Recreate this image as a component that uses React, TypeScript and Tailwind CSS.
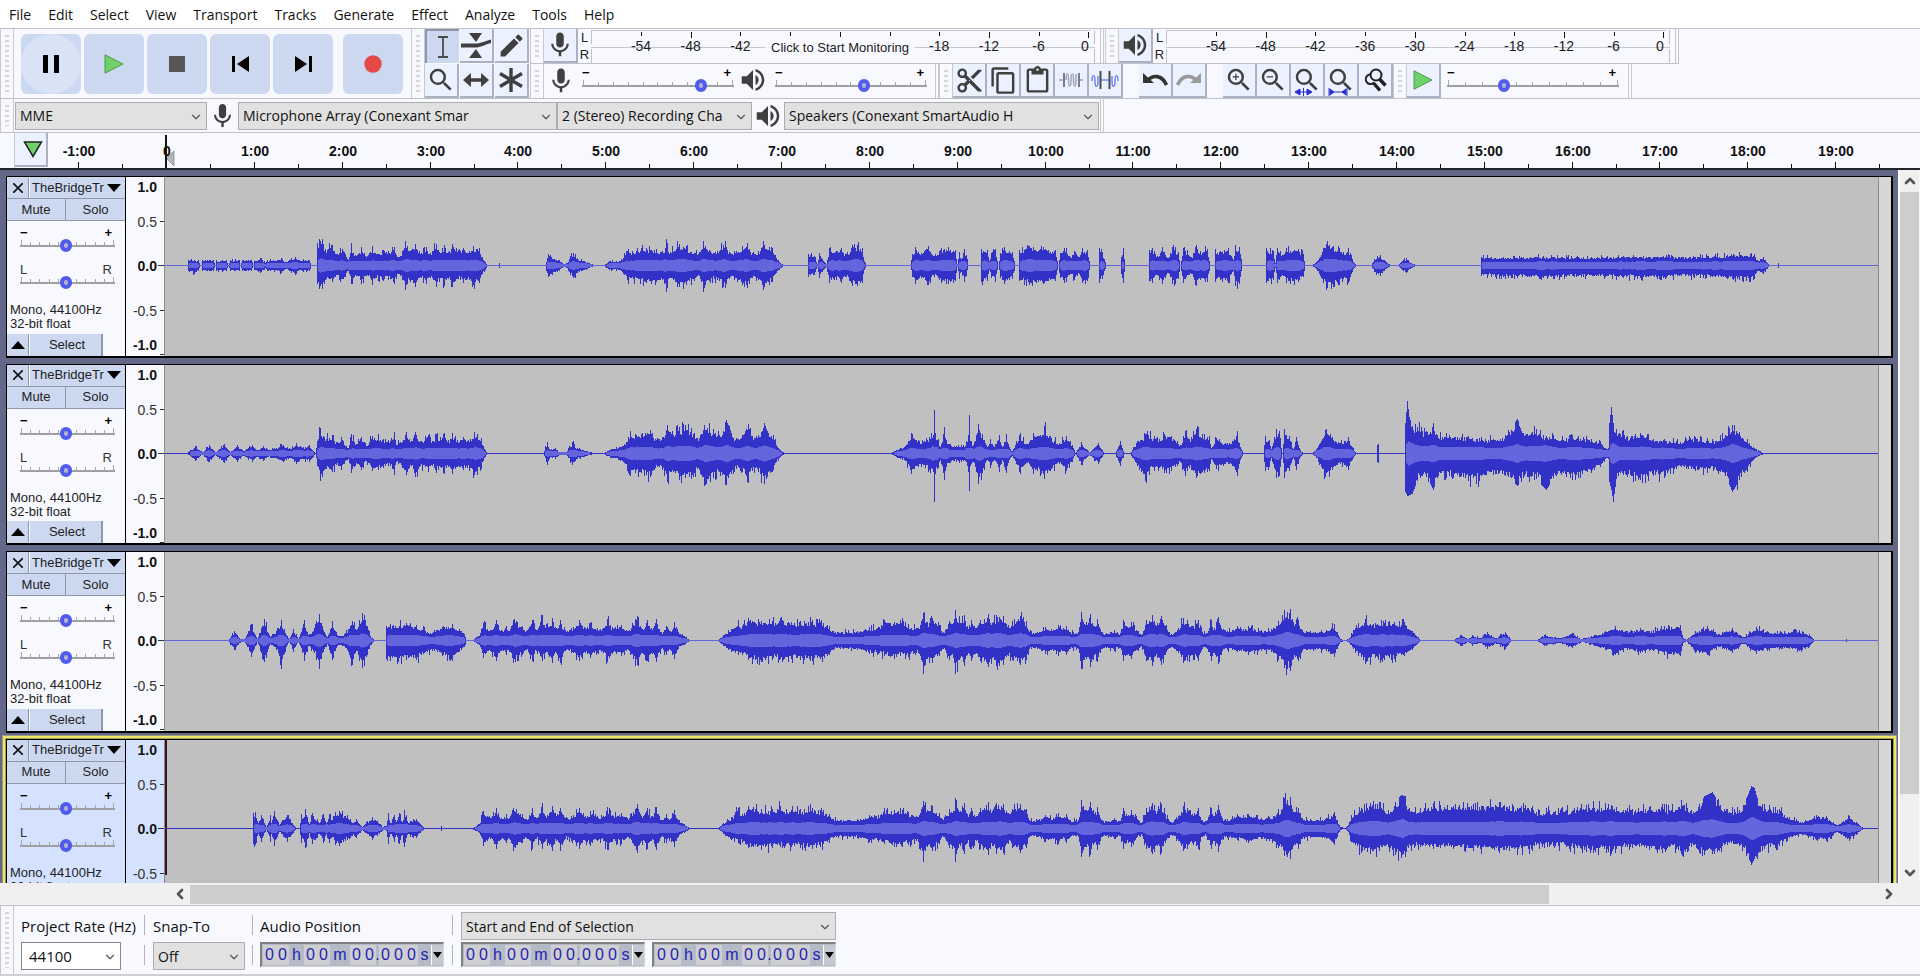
import React, { useMemo, useState } from 'react';
import {
  MdMic,
  MdVolumeUp,
  MdContentCopy,
  MdContentCut,
  MdContentPaste,
  MdSearch,
  MdZoomIn,
  MdZoomOut,
  MdEdit,
} from 'react-icons/md';
import { ChevronDown, ChevronLeft, ChevronRight, ChevronUp } from 'lucide-react';

type Point = [number, number, number?];

const CLIP_WIDTH = 1715;
const CLIP_MID = 88;

const MENUS = ['File', 'Edit', 'Select', 'View', 'Transport', 'Tracks', 'Generate', 'Effect', 'Analyze', 'Tools', 'Help'];

// Envelope points: [x, level above the axis, level below the axis]
const CHORUS: Point[] = [
  [307, 0], [314, 4], [318, 17], [325, 10], [331, 20], [336, 10], [341, 14], [343, 9], [348, 20, 22], [357, 14], [361, 9],
  [367, 20], [371, 10], [377, 25, 20], [380, 12], [387, 22], [391, 12], [395, 20, 22], [400, 10], [406, 12], [414, 20], [420, 12],
  [425, 17], [433, 12], [439, 12], [443, 21], [448, 13], [457, 15], [465, 10], [473, 24], [477, 12], [483, 20], [487, 12],
  [492, 21], [497, 8], [502, 14], [506, 9], [510, 18], [514, 8], [520, 4], [525, 0], [554, 0], [559, 5], [567, 11], [574, 20, 14],
  [578, 14], [584, 22, 19], [597, 19, 21], [608, 19], [616, 22, 18], [627, 18], [636, 19], [640, 19], [648, 20], [656, 18], [665, 14],
  [669, 9], [693, 9], [705, 13], [714, 13], [720, 20, 15], [730, 18], [736, 20, 15], [744, 16], [752, 12], [757, 19], [759, 27, 33],
  [763, 18], [768, 22], [775, 15], [779, 8], [785, 19], [789, 17], [791, 30, 33], [796, 17], [800, 25], [803, 14], [807, 20],
  [812, 12], [816, 20], [824, 26], [828, 17], [832, 25], [839, 24], [844, 15], [848, 19], [856, 24], [862, 19], [865, 8],
  [873, 8], [881, 13], [889, 10], [894, 15], [898, 10], [902, 14], [906, 8], [914, 8], [917, 28], [922, 18], [926, 26],
  [930, 14], [933, 21], [938, 8], [942, 7], [950, 10], [956, 7], [959, 20], [962, 14], [967, 18], [977, 5], [982, 20], [988, 25],
  [993, 17], [997, 24], [1001, 14], [1007, 6], [1014, 12], [1019, 22], [1023, 20], [1028, 14], [1034, 20], [1038, 8], [1042, 7],
  [1047, 20], [1050, 12], [1054, 23], [1058, 10], [1063, 9], [1073, 14, 11], [1081, 11], [1084, 14], [1097, 10], [1109, 12],
  [1114, 19], [1117, 18], [1120, 30, 27], [1123, 28], [1126, 31, 30], [1131, 16], [1134, 20], [1138, 10], [1146, 9], [1162, 10],
  [1170, 16], [1173, 8], [1176, 1],
];

const WAVES: Point[][] = [
  [
    [22, 0], [23, 5], [29, 5, 8], [33, 5], [35, 0], [36, 0], [37, 5], [48, 5], [50, 0], [51, 5], [61, 5], [63, 0], [65, 5], [74, 5], [75, 0],
    [77, 5], [86, 5], [88, 0], [89, 4], [95, 7], [99, 4], [100, 2], [102, 5], [112, 5], [116, 7], [120, 3], [124, 5], [130, 8, 9], [135, 4],
    [138, 6], [144, 5], [146, 0], [151, 0], [152, 22, 18], [154, 26, 23], [157, 26, 23], [160, 16, 14], [167, 20, 16], [171, 11, 9],
    [175, 17, 16], [180, 11], [183, 5], [186, 22, 18], [188, 12], [192, 10], [196, 18], [202, 9], [207, 19], [210, 12], [218, 15], [223, 14],
    [229, 18], [232, 8], [237, 14], [240, 24], [244, 14], [250, 21], [256, 12], [261, 18], [265, 12], [271, 21], [275, 12], [279, 20],
    [283, 13], [287, 21], [292, 13], [298, 17], [304, 14], [308, 19], [314, 17], [317, 8], [322, 0], [333, 0], [334, 2], [335, 0],
    [380, 0], [383, 11], [386, 8], [394, 5], [398, 1], [402, 2], [405, 9], [408, 12], [412, 7], [422, 3], [429, 0], [440, 0], [445, 4],
    [455, 4], [463, 14], [482, 17], [492, 16], [498, 14], [501, 17], [502, 26], [504, 13], [515, 21], [522, 19], [531, 12], [536, 13],
    [539, 24, 26], [545, 15], [553, 14], [561, 24, 22], [565, 13], [571, 12], [578, 19], [583, 22], [588, 12], [594, 14], [599, 24],
    [607, 18, 16], [612, 7], [618, 1], [620, 0], [643, 0], [644, 11], [650, 9], [653, 1], [655, 12], [658, 6], [662, 1], [665, 17],
    [672, 14], [677, 17], [682, 11], [688, 20], [693, 20], [698, 17], [700, 4], [702, 0], [746, 0], [748, 11], [751, 18], [757, 12],
    [764, 19], [769, 9], [777, 17], [784, 18], [791, 15], [793, 1], [795, 13], [797, 6], [800, 16], [802, 10], [804, 0], [816, 0],
    [817, 16], [823, 15], [825, 4], [827, 12], [831, 16], [834, 0], [836, 12], [840, 18], [845, 14], [848, 13], [851, 0], [854, 0],
    [855, 15], [865, 19], [879, 18], [891, 15], [894, 0], [896, 12], [900, 17], [906, 8], [910, 14], [915, 8], [918, 17], [923, 15], [926, 0],
    [934, 0], [935, 17], [938, 13], [942, 0], [956, 0], [957, 8], [959, 17], [961, 0], [984, 0], [985, 15], [988, 17], [993, 9],
    [998, 18], [1004, 7], [1008, 18], [1014, 13], [1016, 0], [1019, 17], [1027, 8], [1032, 20], [1036, 14], [1043, 16], [1046, 0],
    [1050, 0], [1051, 16], [1057, 13], [1064, 17], [1069, 5], [1071, 20], [1075, 18], [1078, 0], [1101, 0], [1102, 17], [1109, 14],
    [1111, 2], [1113, 17], [1119, 10], [1122, 17], [1134, 16], [1139, 11], [1141, 0], [1148, 0], [1152, 3], [1159, 17], [1163, 24, 22],
    [1168, 18], [1174, 19], [1179, 13], [1184, 17], [1188, 6], [1192, 0], [1207, 0], [1210, 6], [1216, 10], [1220, 5], [1226, 0], [1234, 0],
    [1239, 5], [1242, 7], [1247, 2], [1252, 0], [1317, 0], [1318, 8, 10], [1340, 8, 11], [1380, 9, 12], [1420, 8, 11], [1460, 9, 12],
    [1500, 9, 12], [1530, 9, 11], [1564, 10, 13], [1570, 11, 14], [1591, 11, 13], [1594, 5], [1600, 8], [1606, 0], [1614, 0], [1615, 2], [1616, 0],
  ],
  [
    [22, 0], [30, 7], [37, 1], [44, 8], [50, 1], [59, 9], [65, 1], [72, 8], [78, 2], [87, 8], [92, 3], [98, 7], [103, 3], [118, 8], [125, 4],
    [131, 10], [137, 5], [144, 8], [150, 0], [152, 12], [155, 25, 27], [159, 16], [167, 18], [171, 11], [176, 16], [183, 5], [186, 19],
    [191, 9], [196, 16], [201, 7], [207, 17], [218, 14], [225, 12], [229, 21], [231, 8], [241, 21], [246, 12], [250, 21, 23], [255, 12],
    [263, 18], [267, 12], [271, 19], [274, 12], [278, 19], [283, 13], [287, 20], [292, 13], [298, 16], [305, 14], [309, 21], [316, 15],
    [318, 7], [322, 0], [378, 0], [382, 11], [385, 3], [390, 5], [394, 1], [401, 1], [407, 11], [412, 5], [425, 1], [429, 0], [439, 0],
    [447, 4], [455, 6], [460, 9], [466, 22], [471, 19], [486, 23], [491, 14], [498, 16], [503, 28], [509, 18], [515, 26], [527, 25],
    [533, 15], [540, 28, 32], [549, 24], [555, 18], [562, 33, 31], [567, 20], [572, 15], [578, 18], [584, 29], [588, 17], [594, 18],
    [600, 30], [609, 18, 16], [612, 8], [618, 1], [622, 0], [727, 0], [730, 2], [736, 5], [741, 7], [747, 20], [754, 13], [759, 11],
    [765, 16], [769, 18], [770, 43, 48], [771, 20], [774, 14], [776, 6], [780, 26], [782, 13], [790, 7], [797, 8], [801, 7], [804, 18],
    [805, 38, 37], [806, 12], [809, 8], [812, 18], [814, 29, 30], [818, 19], [823, 6], [826, 14], [830, 6], [835, 18], [838, 6], [842, 19],
    [845, 6], [848, 2], [855, 18], [863, 9], [869, 20], [873, 17], [880, 27, 25], [886, 17], [895, 10], [902, 17], [908, 8], [911, 0],
    [917, 11], [923, 3], [925, 1], [934, 10], [940, 0], [951, 0], [956, 12], [960, 0], [966, 0], [973, 12], [982, 19, 29], [984, 18, 17],
    [990, 17], [995, 14], [1000, 19], [1007, 17], [1013, 12], [1016, 8], [1021, 22], [1025, 14], [1032, 24], [1040, 19], [1045, 17],
    [1047, 5], [1052, 15], [1061, 10], [1068, 12], [1073, 22], [1075, 10], [1079, 0], [1099, 0], [1101, 17], [1105, 13], [1107, 4],
    [1112, 24], [1115, 22], [1118, 0], [1120, 24], [1125, 17], [1129, 4], [1132, 16], [1136, 3], [1139, 0], [1148, 0], [1152, 4],
    [1161, 23], [1168, 16], [1176, 10], [1184, 16], [1188, 6], [1192, 0], [1212, 0], [1213, 8], [1214, 9], [1215, 0], [1240, 0], [1241, 30, 38],
    [1243, 52, 42], [1245, 36, 41], [1248, 27, 40], [1253, 26, 27], [1262, 22, 23], [1269, 30, 36], [1273, 18, 24], [1285, 18, 22], [1305, 17, 27],
    [1316, 15, 27], [1330, 14, 21], [1342, 18, 22], [1354, 34, 32], [1360, 20, 24], [1373, 24, 25], [1383, 17, 36], [1390, 18, 24],
    [1403, 15, 23], [1415, 17, 24], [1428, 14, 19], [1437, 12, 13], [1442, 5], [1445, 5], [1446, 30, 28], [1448, 46, 36], [1450, 30, 48],
    [1453, 24, 25], [1464, 17, 23], [1477, 20, 26], [1490, 14, 22], [1501, 14, 24], [1513, 12, 15], [1532, 16, 17], [1550, 12, 17],
    [1562, 18, 22], [1569, 28, 38], [1576, 21, 26], [1584, 14, 18], [1590, 6], [1600, 0],
  ],
  [
    [63, 0], [69, 9], [76, 1], [79, 1], [82, 6], [86, 16], [92, 1], [96, 12], [99, 21], [105, 3], [111, 9], [113, 12], [116, 20, 28], [122, 4], [124, 1],
    [128, 11], [133, 1], [137, 12], [139, 20], [143, 5], [149, 12], [152, 17], [154, 26, 28], [159, 8], [162, 3], [167, 19], [173, 4],
    [180, 7], [187, 19, 24], [191, 10], [194, 20], [197, 27], [199, 25], [202, 14], [205, 4], [209, 0], [220, 0], [221, 14, 18],
    [225, 16, 20], [241, 17, 19], [251, 15, 19], [267, 7, 10], [269, 10], [278, 14], [287, 16, 20], [296, 9], [299, 6], [301, 0],
    ...CHORUS,
    [1180, 0], [1184, 1], [1191, 12], [1201, 21, 23], [1211, 17], [1220, 17, 19], [1230, 18], [1240, 18, 15], [1248, 9], [1256, 0],
    [1290, 0], [1298, 5], [1305, 1], [1309, 5], [1317, 2], [1324, 8], [1332, 2], [1342, 8], [1348, 0], [1374, 0], [1381, 5], [1397, 2],
    [1409, 7], [1418, 1], [1431, 5], [1442, 9], [1452, 14], [1464, 9], [1477, 12], [1490, 10], [1501, 14], [1517, 15], [1520, 2], [1523, 0],
    [1532, 9, 12], [1544, 14], [1556, 6], [1569, 12], [1580, 3], [1593, 13], [1605, 8], [1618, 8], [1636, 10], [1646, 6], [1651, 0], [1682, 0],
    [1683, 1], [1684, 0],
  ],
  [
    [87, 0], [88, 15], [90, 16], [93, 5], [96, 13], [101, 1], [105, 13], [106, 5], [109, 17], [114, 3], [118, 8], [122, 13], [127, 5], [131, 0],
    [134, 0], [136, 14], [138, 10], [140, 19], [144, 4], [147, 15], [152, 9], [154, 5], [158, 14], [161, 5], [164, 14], [167, 8], [170, 16], [174, 17],
    [180, 12], [185, 9], [188, 5], [191, 9], [197, 1], [200, 4], [207, 11], [212, 7], [218, 1], [221, 2], [223, 15], [225, 5], [229, 13],
    [231, 6], [234, 15], [237, 6], [239, 18], [243, 5], [248, 9], [251, 9], [259, 0], [275, 0], [276, 2], [277, 0],
    ...CHORUS,
    [1181, 0], [1184, 3], [1187, 13], [1197, 20, 24], [1206, 25], [1215, 26, 22], [1224, 18], [1231, 26], [1237, 33, 29], [1241, 32, 28], [1244, 19],
    [1256, 20, 18], [1269, 25, 20], [1276, 23, 19], [1290, 22, 20], [1310, 24, 22], [1336, 26, 24], [1346, 22], [1369, 22], [1373, 16],
    [1386, 18], [1403, 18], [1423, 23], [1449, 22], [1469, 19], [1486, 21], [1499, 24], [1506, 18], [1518, 28, 25], [1528, 18], [1536, 24],
    [1541, 32, 26], [1549, 36, 25], [1554, 28, 23], [1564, 19, 16], [1576, 18, 17], [1584, 32, 25], [1588, 42, 36], [1591, 40, 30],
    [1594, 30, 30], [1599, 24, 22], [1616, 19, 17], [1626, 11, 9], [1639, 6], [1653, 13, 11], [1663, 12], [1674, 3], [1686, 12], [1693, 6], [1700, 0],
  ],
];

const sampleAt = (points: Point[], x: number, side: 1 | 2) => {
  const i = points.findIndex(p => p[0] >= x);
  if (i <= 0) return 0;
  const a = points[i - 1];
  const b = points[i];
  const va = side === 2 ? a[2] ?? a[1] : a[1];
  const vb = side === 2 ? b[2] ?? b[1] : b[1];
  return va + ((vb - va) * (x - a[0])) / (b[0] - a[0] || 1);
};

const stepPath = (top: number[], bottom: number[]) => {
  let d = `M0 ${CLIP_MID}`;
  top.forEach((v, x) => { d += `V${(CLIP_MID - v).toFixed(1)}H${x + 1}`; });
  for (let x = bottom.length - 1; x >= 0; x--) d += `V${(CLIP_MID + 1 + bottom[x]).toFixed(1)}H${x}`;
  return d + 'Z';
};

const buildWave = (points: Point[], seed: number, darkAxis: boolean) => {
  let s = seed;
  const rand = () => {
    s = (s * 16807) % 2147483647;
    return s / 2147483647;
  };
  const marked = new Set(points.map(p => p[0]));
  const up: number[] = [];
  const down: number[] = [];
  for (let x = 0; x < CLIP_WIDTH; x++) {
    const gain = () => (marked.has(x) ? 1 : 0.7 + rand() * 0.24 + (rand() > 0.86 ? 0.3 : 0));
    const u = sampleAt(points, x, 1);
    const d = sampleAt(points, x, 2);
    up.push(u > 30 ? u : u * gain());
    down.push(d > 30 ? d : d * gain());
  }
  const rms = up.map((_, x) => {
    let sum = 0;
    let low = 99;
    for (let k = -3; k <= 3; k++) {
      const v = ((up[x + k] ?? 0) + (down[x + k] ?? 0)) / 2;
      sum += v;
      if (Math.abs(k) < 2) low = Math.min(low, v);
    }
    return Math.round(Math.min(low * 0.7, 1 + (sum / 7) * 0.27));
  });
  const rmsDown = rms.map(v => (darkAxis && v === 0 ? -1 : v));
  return { peak: stepPath(up, down), rms: stepPath(rms, rmsDown) };
};

const Gripper = () => (
  <div className="w-[14px] shrink-0 self-stretch border-x border-[#c9c9cd] px-1 py-[6px]">
    <div className="h-full bg-[repeating-linear-gradient(to_bottom,#d4d4da_0px,#d4d4da_2px,transparent_2px,transparent_5px)]" />
  </div>
);

const BarEnd = () => <div className="ml-[5px] w-[4px] shrink-0 self-stretch border-x border-[#c9c9cd]" />;

const ToolButton = ({ label, active, children }: { label: string; active?: boolean; children: React.ReactNode }) => (
  <button
    aria-label={label}
    className={`flex h-[34px] w-[34px] shrink-0 items-center justify-center overflow-hidden text-[#3f3f3f] ${
      active ? 'border-t-2 border-l-2 border-[#8d97ab] bg-[#ccd8f0]' : 'border-r-2 border-b-2 border-[#aab1c2] bg-[#ebf1ff]'
    }`}
  >
    {children}
  </button>
);

const TransportButton = ({ label, round, children }: { label: string; round?: boolean; children: React.ReactNode }) => (
  <button aria-label={label} className="flex h-[60px] w-[60px] items-center justify-center rounded-md bg-[#ccd8f0]">
    <span className={`flex h-full w-full items-center justify-center rounded-full ${round ? 'bg-[#dae3f5]' : ''}`}>{children}</span>
  </button>
);

const Slider = ({ label, value, left = '−', right = '+', className }: { label: string; value: number; left?: string; right?: string; className: string }) => {
  const [level, setLevel] = useState(value);
  const heavy = left === '−' ? 'font-bold text-black' : 'text-[#333]';
  return (
    <div className={`shrink-0 ${className}`}>
      <div className={`flex h-3 justify-between pr-[3px] text-[13px] leading-3 ${heavy}`}>
        <span>{left}</span>
        <span>{right}</span>
      </div>
      <div className="relative h-[13px]">
        <div className="flex h-[6px] items-end justify-between px-px">
          {Array.from({ length: 11 }, (_, i) => (
            <span key={i} className={`w-px bg-[#a9a9a9] ${i % 10 === 0 ? 'h-[5px]' : 'h-[3px]'}`} />
          ))}
        </div>
        <div className="h-[2px] bg-[#a0a0a0]" />
        <input
          type="range"
          aria-label={label}
          min={0}
          max={100}
          value={level}
          onChange={e => setLevel(Number(e.target.value))}
          className="absolute inset-0 h-[13px] w-full appearance-none bg-transparent [&::-webkit-slider-thumb]:h-[13px] [&::-webkit-slider-thumb]:w-3 [&::-webkit-slider-thumb]:appearance-none [&::-webkit-slider-thumb]:rounded-full [&::-webkit-slider-thumb]:border-4 [&::-webkit-slider-thumb]:border-[#4f5aee] [&::-webkit-slider-thumb]:bg-[#b4b4cc]"
        />
      </div>
    </div>
  );
};

const Select = ({ label, text, className }: { label: string; text: string; className: string }) => (
  <div className={`relative shrink-0 ${className}`}>
    <select
      aria-label={label}
      className="h-7 w-full appearance-none border border-[#adadad] bg-[#e1e1e1] pr-7 pl-1 font-['Open_Sans',sans-serif] text-[14px] text-[#111]"
    >
      <option>{text}</option>
    </select>
    <ChevronDown className="pointer-events-none absolute top-2 right-1 h-[14px] w-[14px] text-[#555]" strokeWidth={2} />
  </div>
);

const Meter = ({ label, icon, monitor }: { label: string; icon: React.ReactNode; monitor?: boolean }) => {
  const marks = [-54, -48, -42, -36, -30, -24, -18, -12, -6, 0];
  return (
    <>
      <ToolButton label={label}>{icon}</ToolButton>
      <div className="flex w-[13px] shrink-0 flex-col items-center text-[13px] leading-[17px] text-[#222]">
        <span>L</span>
        <span>R</span>
      </div>
      <svg className="h-[34px] w-[504px] shrink-0" fontSize="14" fill="#222">
        <path d="M0.5 1V15M0.5 20V34M503.5 1V15M503.5 20V34" stroke="#c2c2c6" />
        <path d="M0 1.5H500M0 18.5H504" stroke="#c8c8cc" />
        {marks.map((m, i) => (
          <g key={m}>
            <rect x={Math.round(50 + i * 49.7)} y="3" width="1" height={i % 3 === 1 || m === 0 ? 6 : 4} fill="#111" />
            {(!monitor || m < -36 || m > -24) && (
              <text x={m === 0 ? 494 : 50 + i * 49.7} y="22" textAnchor="middle">{m}</text>
            )}
          </g>
        ))}
        {monitor && (
          <>
            <rect x="174" y="8" width="150" height="22" fill="#f9faff" />
            <text x="249" y="23" fontSize="13" textAnchor="middle">Click to Start Monitoring</text>
          </>
        )}
      </svg>
    </>
  );
};

const PlayIcon = ({ className }: { className: string }) => (
  <svg viewBox="0 0 20 20" className={className}>
    <path d="M1 .8 19 10 1 19.2z" fill="#6fd268" stroke="#4f9a4c" strokeWidth="1" />
  </svg>
);

const SilenceIcon = ({ outer }: { outer?: boolean }) => (
  <svg viewBox="0 0 28 24" className="h-6 w-7 shrink-0" fill="none" strokeWidth="1.5">
    {outer ? (
      <>
        <path d="M1 13c0-7 3-7 3 0s3 7 3 0V8M21 8v5c0 7 3 7 3 0s3-7 3 0" stroke="#7585ee" />
        <path d="M10 12h8" stroke="#7585ee" />
        <path d="M9.500 3v18M18.500 3v18" stroke="#4a4a4a" strokeWidth="2" />
      </>
    ) : (
      <>
        <path d="M2 12h5M22 12h4" stroke="#9aa0b0" />
        <path d="M9 12c0-8 2.500-8 2.500 0s2.500 8 2.500 0 2.500-8 2.500 0 2.500 8 2.500 0V6" stroke="#a0a6b6" />
        <path d="M7 5v14M22 5v14" stroke="#777c88" strokeWidth="2" />
      </>
    )}
  </svg>
);

const FitIcon = ({ project }: { project?: boolean }) => (
  <span className="relative flex h-full w-full items-center justify-center">
    <MdSearch className="h-[30px] w-[30px] shrink-0" />
    <svg viewBox="0 0 20 8" className="absolute bottom-0 left-[3px] h-[8px] w-5" fill="#2d2dcc" stroke="#2d2dcc">
      {project ? (
        <path d="M1 0v8M19 0v8M3 4h14M2 1l4 3-4 3zM18 1l-4 3 4 3z" />
      ) : (
        <path d="M1 4l5-3v6zM18 4l-5-3v6zM4 4h12M9.500 0v8" />
      )}
    </svg>
  </span>
);

const Toolbar = () => (
  <div className="flex h-[71px] shrink-0 overflow-hidden border-y border-[#c2c2c6]">
    <Gripper />
    <div className="flex w-[397px] shrink-0 items-center gap-[3px] pl-[7px]">
      <TransportButton label="Pause" round>
        <svg viewBox="0 0 16 18" className="h-[18px] w-4"><path d="M0 0h5v18H0zM11 0h5v18h-5z" /></svg>
      </TransportButton>
      <TransportButton label="Play"><PlayIcon className="h-5 w-5" /></TransportButton>
      <TransportButton label="Stop">
        <svg viewBox="0 0 16 16" className="h-4 w-4"><path d="M0 0h16v16H0z" fill="#575757" /></svg>
      </TransportButton>
      <TransportButton label="Skip to Start">
        <svg viewBox="0 0 17 16" className="h-4 w-[17px]"><path d="M0 0h3v16H0zM17 0v16L5 8z" /></svg>
      </TransportButton>
      <TransportButton label="Skip to End">
        <svg viewBox="0 0 17 16" className="h-4 w-[17px]"><path d="M14 0h3v16h-3zM0 0l12 8L0 16z" /></svg>
      </TransportButton>
      <div className="ml-[7px]">
        <TransportButton label="Record">
          <svg viewBox="0 0 18 18" className="h-[18px] w-[18px]"><circle cx="9" cy="9" r="8.700" fill="#e44848" /></svg>
        </TransportButton>
      </div>
    </div>
    <Gripper />
    <div className="grid shrink-0 grid-cols-3 content-start gap-px pr-px">
      <ToolButton label="Selection Tool" active>
        <svg viewBox="0 0 12 22" className="h-[22px] w-3" fill="none" stroke="#4a4a4a" strokeWidth="1.800">
          <path d="M1 1h10M1 21h10M6 1v20" />
        </svg>
      </ToolButton>
      <ToolButton label="Envelope Tool">
        <svg viewBox="0 0 32 28" className="h-7 w-8" fill="#3f3f3f">
          <path d="M9 2h13l-6 9zM9 27h13l-6-9zM1 12.500h14c5 0 9-2 16-4v3.500c-7 2-10 4.500-16 4.500H1z" />
        </svg>
      </ToolButton>
      <ToolButton label="Draw Tool"><MdEdit className="h-[29px] w-[29px] shrink-0" /></ToolButton>
      <ToolButton label="Zoom Tool"><MdSearch className="h-[30px] w-[30px] shrink-0" /></ToolButton>
      <ToolButton label="Time Shift Tool">
        <svg viewBox="0 0 26 14" className="h-[14px] w-[26px]" fill="#3f3f3f">
          <path d="M0 7l8-7v5.200h10V0l8 7-8 7V8.800H8V14z" />
        </svg>
      </ToolButton>
      <ToolButton label="Multi-Tool">
        <svg viewBox="0 0 24 24" className="h-6 w-6" stroke="#3f3f3f" strokeWidth="3.400">
          <path d="M12 0v24M1 5.500l22 13M23 5.500l-22 13" />
        </svg>
      </ToolButton>
    </div>
    <div>
      <div className="flex h-[35px] border-b border-[#c2c2c6]">
        <Gripper />
        <Meter label="Recording Meter" icon={<MdMic className="h-[30px] w-[30px] shrink-0" />} monitor />
        <BarEnd />
        <div className="ml-px flex"><Gripper /></div>
        <Meter label="Playback Meter" icon={<MdVolumeUp className="h-[30px] w-[30px] shrink-0" />} />
        <BarEnd />
      </div>
      <div className="flex h-[34px]">
        <Gripper />
        <MdMic className="mt-[2px] h-[30px] w-[34px] shrink-0 text-[#3f3f3f]" />
        <Slider label="Recording Volume" value={81} className="ml-1 mt-[3px] w-[152px]" />
        <MdVolumeUp className="mt-px ml-1 h-[30px] w-[30px] shrink-0 text-[#3f3f3f]" />
        <Slider label="Playback Volume" value={59} className="ml-[7px] mt-[3px] w-[152px]" />
        <div className="ml-[3px] flex"><BarEnd /></div>
        <Gripper />
        <div className="flex">
          <ToolButton label="Cut"><MdContentCut className="h-[29px] w-[29px] shrink-0" /></ToolButton>
          <ToolButton label="Copy"><MdContentCopy className="h-[29px] w-[29px] shrink-0" /></ToolButton>
          <ToolButton label="Paste"><MdContentPaste className="h-[29px] w-[29px] shrink-0" /></ToolButton>
          <ToolButton label="Trim Audio"><SilenceIcon /></ToolButton>
          <ToolButton label="Silence Audio"><SilenceIcon outer /></ToolButton>
        </div>
        <div className="ml-4 flex">
          <ToolButton label="Undo">
            <svg viewBox="0 0 26 16" className="h-4 w-[26px]">
              <path d="M1 1v10h11z" fill="#333" />
              <path d="M5 9C11 2 20 3 24.500 13" fill="none" stroke="#333" strokeWidth="3.600" />
            </svg>
          </ToolButton>
          <ToolButton label="Redo">
            <svg viewBox="0 0 26 16" className="h-4 w-[26px]">
              <path d="M25 1v10H14z" fill="#9a9a9a" />
              <path d="M21 9C15 2 6 3 1.500 13" fill="none" stroke="#9a9a9a" strokeWidth="3.600" />
            </svg>
          </ToolButton>
        </div>
        <div className="ml-4 flex">
          <ToolButton label="Zoom In"><MdZoomIn className="h-[30px] w-[30px] shrink-0" /></ToolButton>
          <ToolButton label="Zoom Out"><MdZoomOut className="h-[30px] w-[30px] shrink-0" /></ToolButton>
          <ToolButton label="Fit Selection"><FitIcon /></ToolButton>
          <ToolButton label="Fit Project"><FitIcon project /></ToolButton>
          <ToolButton label="Zoom Toggle">
            <svg viewBox="0 0 24 24" className="h-6 w-6" fill="none" stroke="#222" strokeWidth="2">
              <circle cx="13" cy="7" r="5.500" />
              <path d="M8 6.500a4.800 4.800 0 1 0 3 8" />
              <path d="M16.500 11l6 6.500M10.500 15l6.500 7.500" strokeWidth="3.400" />
            </svg>
          </ToolButton>
        </div>
        <Gripper />
        <ToolButton label="Play at Speed"><PlayIcon className="h-5 w-5" /></ToolButton>
        <Slider label="Playback Speed" value={32} className="ml-[6px] mt-[3px] w-[172px]" />
        <div className="ml-1 flex"><BarEnd /></div>
      </div>
    </div>
  </div>
);

const DeviceBar = () => (
  <div className="flex h-[34px] shrink-0 items-center overflow-hidden border-b border-[#c2c2c6]">
    <Gripper />
    <Select label="Audio Host" text="MME" className="ml-px w-[192px]" />
    <MdMic className="mx-px h-[30px] w-[29px] shrink-0 text-[#3f3f3f]" />
    <Select label="Recording Device" text="Microphone Array (Conexant Smar" className="w-[319px]" />
    <Select label="Recording Channels" text="2 (Stereo) Recording Channels" className="w-[195px]" />
    <MdVolumeUp className="mx-px h-[30px] w-[30px] shrink-0 text-[#3f3f3f]" />
    <Select label="Playback Device" text="Speakers (Conexant SmartAudio H" className="w-[315px]" />
    <div className="-ml-1 flex self-stretch"><BarEnd /></div>
  </div>
);

const Timeline = () => {
  const minutes = Array.from({ length: 21 }, (_, i) => i - 1);
  return (
    <div className="flex h-[37px] shrink-0 overflow-hidden border-b-2 border-[#24262e]">
      <div className="w-[15px] shrink-0 border-r border-[#c9c9cd]" />
      <button aria-label="Pinned Play Head" className="flex h-[34px] w-[33px] shrink-0 items-center justify-center border-r-2 border-b-2 border-[#aab1c2] bg-[#ebf1ff] pl-1">
        <svg viewBox="0 0 20 17" className="h-[17px] w-5">
          <path d="M1.500 1h17L10 15.500z" fill="#6fd268" stroke="#222" strokeWidth="1.500" />
        </svg>
      </button>
      <svg className="h-[35px] min-w-0 flex-1" fontSize="14" fontWeight="bold" fill="#111">
        <path d="M126 18v15l-8-8z" fill="#b5b5b5" stroke="#777" strokeWidth=".6" />
        <rect x="117" y="2" width="2" height="33" />
        {minutes.map(m => {
          const x = Math.round(118 + m * 87.85);
          return (
            <g key={m}>
              {m < 20 && <text x={x + 1} y="23" textAnchor="middle">{m === 0 ? '0' : `${m}:00`}</text>}
              {m < 20 && <rect x={x} y="29" width="1" height="6" />}
              {m < 20 && <rect x={x + 44} y="31" width="1" height="4" />}
            </g>
          );
        })}
      </svg>
    </div>
  );
};

const Track = ({ points, seed, selected, darkAxis }: { points: Point[]; seed: number; selected: boolean; darkAxis: boolean }) => {
  const wave = useMemo(() => buildWave(points, seed, darkAxis), [points, seed, darkAxis]);
  const bg = selected ? 'bg-[#d4e2ff]' : 'bg-[#f8f9ff]';
  return (
    <section className="flex min-h-0 pb-[6px]">
      <div
        className={`flex min-w-0 flex-1 border-t border-r-2 border-b-2 border-l border-black ${bg} ${
          selected ? 'shadow-[0_0_0_1px_#a3a04c,0_0_0_3px_#ece66c,0_0_0_4px_#9a9a84]' : ''
        }`}
      >
        {/* Control panel */}
        <div className="flex w-[119px] shrink-0 flex-col border-r border-black text-[13px] text-[#222]">
          <div className="flex h-[22px] shrink-0 gap-px border-b border-[#8f98ab]">
            <button aria-label="Close track" className="flex w-[22px] items-center justify-center border-r border-[#8f98ab] bg-[#ccd8f0] pl-px">
              <svg viewBox="0 0 10 10" className="h-[10px] w-[10px]" stroke="#111" strokeWidth="1.600"><path d="M0 0l10 10M10 0L0 10" /></svg>
            </button>
            <button className="flex flex-1 items-center gap-[3px] bg-[#ccd8f0] pl-[2px]">
              TheBridgeTr
              <svg viewBox="0 0 14 8" className="h-2 w-[14px]"><path d="M0 0h14L7 8z" /></svg>
            </button>
          </div>
          <div className="flex h-[22px] shrink-0 border-b border-[#8f98ab] bg-[#ccd8f0]">
            <button className="w-[59px] border-r border-[#8f98ab]">Mute</button>
            <button className="flex-1">Solo</button>
          </div>
          <Slider label="Gain" value={48} className="ml-[13px] mt-[6px] w-[95px]" />
          <Slider label="Pan" value={48} left="L" right="R" className="ml-[13px] mt-3 w-[95px]" />
          <p className="mt-[14px] pl-[3px] leading-[14px]">
            Mono, 44100Hz
            <br />
            32-bit float
          </p>
          <div className="mt-auto flex h-[22px] gap-px">
            <button aria-label="Collapse" className="flex w-[22px] items-center justify-center border-r border-[#8f98ab] bg-[#ccd8f0]">
              <svg viewBox="0 0 14 8" className="h-2 w-[14px]"><path d="M0 8h14L7 0z" /></svg>
            </button>
            <button className="w-[73px] border-r-2 border-[#8f98ab] bg-[#ccd8f0] pl-[3px]">Select</button>
          </div>
        </div>

        {/* Amplitude scale */}
        <svg className="h-full w-[38px] shrink-0" fontSize="14" textAnchor="end" fill="#333">
          <text x="31" y="15" fontWeight="bold" fill="#111">1.0</text>
          <text x="31" y="50">0.5</text>
          <text x="31" y="94" fontWeight="bold" fill="#111">0.0</text>
          <text x="31" y="139">-0.5</text>
          <text x="31" y="173" fontWeight="bold" fill="#111">-1.0</text>
          <path d="M34 44.500h4M32 88.500h6M34 133.500h4M34 177.500h4" stroke="#333" />
        </svg>

        {/* Clip */}
        <div className="relative min-w-0 flex-1 border-x border-[#8c8c8c] bg-[#c0c0c0]">
          <svg viewBox={`0 0 ${CLIP_WIDTH} 179`} preserveAspectRatio="none" className="absolute inset-x-0 top-0 h-[179px] w-full">
            <g shapeRendering="crispEdges">
              <path d={wave.peak} fill="#3232c8" />
              <path d={wave.rms} fill="#6464dc" />
            </g>
          </svg>
          {selected && <div className="h-[135px] w-[2px] bg-[#3a1518]" />}
        </div>
        <div className="w-[12px] shrink-0 bg-[#d6d6d6]" />
      </div>
    </section>
  );
};

const TimeField = ({ label }: { label: string }) => (
  <div role="group" aria-label={label} className="flex h-[25px] w-[184px] items-stretch border-t-2 border-l-2 border-r border-b border-[#d8d8d8] border-t-[#808080] border-l-[#808080] bg-[#b4bac6] py-px pl-px text-[16px] text-[#2424b4]">
    {'00h00m00.000s'.split('').map((c, i) => (
      <span
        key={i}
        className={`flex items-center justify-center ${
          c === '0' ? 'w-[13px] bg-[#cfcfd1]' : c === 'm' ? 'w-5' : c === 'h' ? 'w-[15px]' : c === '.' ? 'w-[3px]' : 'w-[13px]'
        }`}
      >
        {c}
      </span>
    ))}
    <button aria-label={`${label} format`} className="flex flex-1 items-center justify-center border-l border-white bg-[#c4c8d0]">
      <svg viewBox="0 0 9 6" className="h-[6px] w-[9px]"><path d="M0 0h9L4.500 6z" /></svg>
    </button>
  </div>
);

const Divider = () => (
  <div className="flex flex-col gap-[10px] pt-[9px]">
    <div className="h-5 w-px bg-[#b4b4b8]" />
    <div className="h-5 w-px bg-[#b4b4b8]" />
  </div>
);

const SelectionBar = () => (
  <footer className="flex h-[71px] shrink-0 overflow-hidden border-t border-[#c2c2c6] pb-[2px] font-['Open_Sans',sans-serif] text-[15px] text-[#111] shadow-[inset_0_-2px_0_#d0d0d4]">
    <Gripper />
    <div className="ml-[7px] w-[123px] pt-[6px]">
      <label htmlFor="rate" className="block h-[30px] leading-[28px] whitespace-nowrap">Project Rate (Hz)</label>
      <div className="relative w-[100px]">
        <input id="rate" defaultValue="44100" className="h-7 w-full border border-[#8a8a8a] bg-white pl-[7px]" />
        <ChevronDown className="pointer-events-none absolute top-2 right-1 h-[14px] w-[14px] text-[#555]" />
      </div>
    </div>
    <Divider />
    <div className="ml-2 w-[99px] pt-[6px]">
      <p className="h-[30px] leading-[28px]">Snap-To</p>
      <Select label="Snap-To" text="Off" className="w-[92px]" />
    </div>
    <Divider />
    <div className="ml-[7px] w-[192px] pt-[6px]">
      <p className="h-[30px] leading-[28px]">Audio Position</p>
      <div className="font-['Liberation_Sans',Arial,sans-serif]"><TimeField label="Audio Position" /></div>
    </div>
    <Divider />
    <div className="ml-2 pt-[6px]">
      <Select label="Selection mode" text="Start and End of Selection" className="mb-[2px] w-[375px]" />
      <div className="flex gap-[7px] font-['Liberation_Sans',Arial,sans-serif]">
        <TimeField label="Selection Start" />
        <TimeField label="Selection End" />
      </div>
    </div>
  </footer>
);

const App: React.FC = () => {
  return (
    <div className="flex h-screen flex-col overflow-hidden bg-[#f8f9ff] font-['Liberation_Sans',Arial,sans-serif]">
      <nav className="flex h-7 shrink-0 items-center gap-[17px] bg-white pt-px pl-[9px] font-['Open_Sans',sans-serif] text-[14px] text-[#111]">
        {MENUS.map(m => (
          <button key={m}>{m}</button>
        ))}
      </nav>
      <Toolbar />
      <DeviceBar />
      <Timeline />

      {/* Tracks */}
      <main className="flex min-h-0 flex-1">
        <div className="min-w-0 flex-1 overflow-hidden border-r border-white bg-[#636788] pt-[6px] pr-[5px] pl-[6px]">
          <div className="grid h-[750px] grid-rows-4">
            {WAVES.map((points, i) => (
              <Track key={i} points={points} seed={i * 7919 + 1237} selected={i === 3} darkAxis={i % 2 === 1} />
            ))}
          </div>
        </div>
        <div className="flex w-[21px] shrink-0 flex-col items-center border-x border-[#f8f8f8] bg-[#f0f0f0] text-[#555]">
          <button aria-label="Scroll up" className="flex h-[22px] items-center"><ChevronUp className="h-4 w-4" strokeWidth={4} /></button>
          <div className="w-full flex-[602] bg-[#cdcdcd]" />
          <div className="flex-[68]" />
          <button aria-label="Scroll down" className="flex h-[21px] items-center"><ChevronDown className="h-4 w-4" strokeWidth={4} /></button>
        </div>
      </main>
      <div className="flex h-[22px] shrink-0 items-center bg-[#f0f0f0] pr-[21px] pl-[170px] text-[#555]">
        <button aria-label="Scroll left" className="flex w-5 justify-center"><ChevronLeft className="h-4 w-4" strokeWidth={4} /></button>
        <div className="h-[19px] flex-[1359] bg-[#cdcdcd]" />
        <div className="flex-[330]" />
        <button aria-label="Scroll right" className="flex w-5 justify-center"><ChevronRight className="h-4 w-4" strokeWidth={4} /></button>
      </div>
      <SelectionBar />
    </div>
  );
};

export default App;
